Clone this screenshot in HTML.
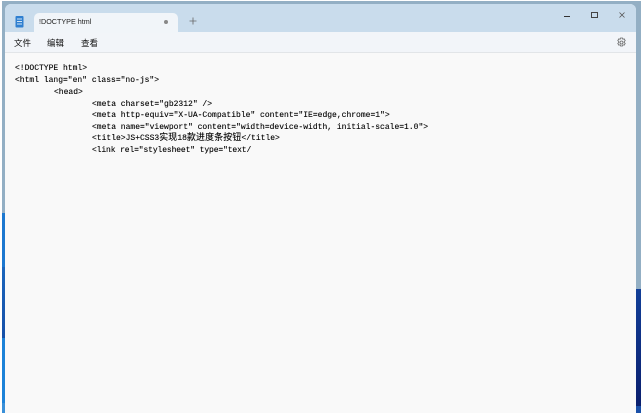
<!DOCTYPE html>
<html lang="zh">
<head>
<meta charset="utf-8">
<title>!DOCTYPE html</title>
<style>
html,body{margin:0;padding:0}
body{width:644px;height:413px;overflow:hidden;position:relative;background:#fff;font-family:"Liberation Sans","Noto Sans CJK SC",sans-serif}
.a{position:absolute}
#bg{left:2px;top:1px;width:639px;height:412px;background:#93afc4}
#win{left:5px;top:4px;width:631px;height:409px;background:#f9f9f9;border-radius:6px 6px 0 0;overflow:hidden}
#title{left:0;top:0;width:631px;height:28px;background:#c9dcec}
#menu{left:0;top:28px;width:631px;height:20px;background:#f2f5f9;border-bottom:1px solid #e2e5e8}
#tab{left:29px;top:9px;width:144px;height:20px;background:#f1f5f9;border-radius:5px 5px 0 0}
.t{position:absolute;white-space:pre;line-height:12px;color:#222;filter:blur(.3px)}
.m{font-family:"Liberation Mono","Noto Sans CJK SC",monospace;font-size:8px;color:#000;-webkit-text-stroke:.12px #000}
.c{font-size:8.9px;font-family:"Noto Sans CJK SC",sans-serif;letter-spacing:.2px;line-height:1}
.menu{font-size:8.5px;font-family:"Noto Sans CJK SC",sans-serif;color:#111}
</style>
</head>
<body>
<div class="a" id="bg"></div>
<div class="a" style="left:2px;top:213px;width:3px;height:54px;background:#1c78d0"></div>
<div class="a" style="left:2px;top:267px;width:3px;height:71px;background:linear-gradient(#1b66bd,#1650a8)"></div>
<div class="a" style="left:2px;top:338px;width:3px;height:65px;background:#1c82d8"></div>
<div class="a" style="left:2px;top:403px;width:3px;height:10px;background:#3a90d8"></div>
<div class="a" style="left:636px;top:289px;width:5px;height:117px;background:linear-gradient(#123f98,#0a1f6e)"></div>
<div class="a" style="left:636px;top:406px;width:5px;height:7px;background:#1a50a8"></div>
<div class="a" id="win">
  <div class="a" id="title"></div>
  <div class="a" id="menu"></div>
  <div class="a" id="tab"></div>
  <svg class="a" style="left:9px;top:11px" width="11" height="14" viewBox="0 0 11 14">
    <rect x="1.500" y="1" width="8" height="11.500" rx="1" fill="#2f7fd0"/>
    <path d="M3 4h5M3 6.500h5M3 9h5" stroke="#cfe4f6" stroke-width="1"/>
  </svg>
  <div class="t" style="left:34px;top:12px;font-size:7.2px;color:#222">!DOCTYPE html</div>
  <div class="a" style="left:159px;top:16px;width:4px;height:4px;border-radius:50%;background:#888"></div>
  <svg class="a" style="left:184px;top:13px" width="8" height="8" viewBox="0 0 8 8"><path d="M4 .5v7M.5 4h7" stroke="#666" stroke-width=".8"/></svg>
  <div class="a" style="left:559px;top:12px;width:6px;height:1px;background:#333"></div>
  <div class="a" style="left:586px;top:8px;width:5px;height:4px;border:1px solid #444"></div>
  <svg class="a" style="left:614px;top:8px" width="6" height="6" viewBox="0 0 6 6"><path d="M.5.500l5 5M5.500.500l-5 5" stroke="#555" stroke-width=".8"/></svg>
  <svg class="a" style="left:611px;top:33px" width="11" height="11" viewBox="0 0 11 11" fill="none" stroke="#666" stroke-width=".8">
    <path d="M4.500 1h2l.4 1.300 1.300-.4 1 1.700-1 1v1l1 .9-1 1.700-1.300-.4-.4 1.200h-2l-.4-1.200-1.300.4-1-1.700 1-.9v-1l-1-1 1-1.700 1.300.4z"/>
    <circle cx="5.500" cy="5.500" r="1.500"/>
  </svg>
  <div class="t menu" style="left:9px;top:33px">文件</div>
  <div class="t menu" style="left:42px;top:33px">编辑</div>
  <div class="t menu" style="left:76px;top:33px">查看</div>
  <div class="t m" style="left:10px;top:59px">&lt;!DOCTYPE html&gt;</div>
  <div class="t m" style="left:10px;top:71px">&lt;html lang="en" class="no-js"&gt;</div>
  <div class="t m" style="left:49px;top:83px">&lt;head&gt;</div>
  <div class="t m" style="left:87px;top:95px">&lt;meta charset="gb2312" /&gt;</div>
  <div class="t m" style="left:87px;top:106px">&lt;meta http-equiv="X-UA-Compatible" content="IE=edge,chrome=1"&gt;</div>
  <div class="t m" style="left:87px;top:118px">&lt;meta name="viewport" content="width=device-width, initial-scale=1.0"&gt;</div>
  <div class="t m" style="left:87px;top:129px">&lt;title&gt;JS+CSS3<span class="c">实现</span>18<span class="c">款进度条按钮</span>&lt;/title&gt;</div>
  <div class="t m" style="left:87px;top:141px;letter-spacing:-.12px">&lt;link rel="stylesheet" type="text/</div>
</div>
</body>
</html>
